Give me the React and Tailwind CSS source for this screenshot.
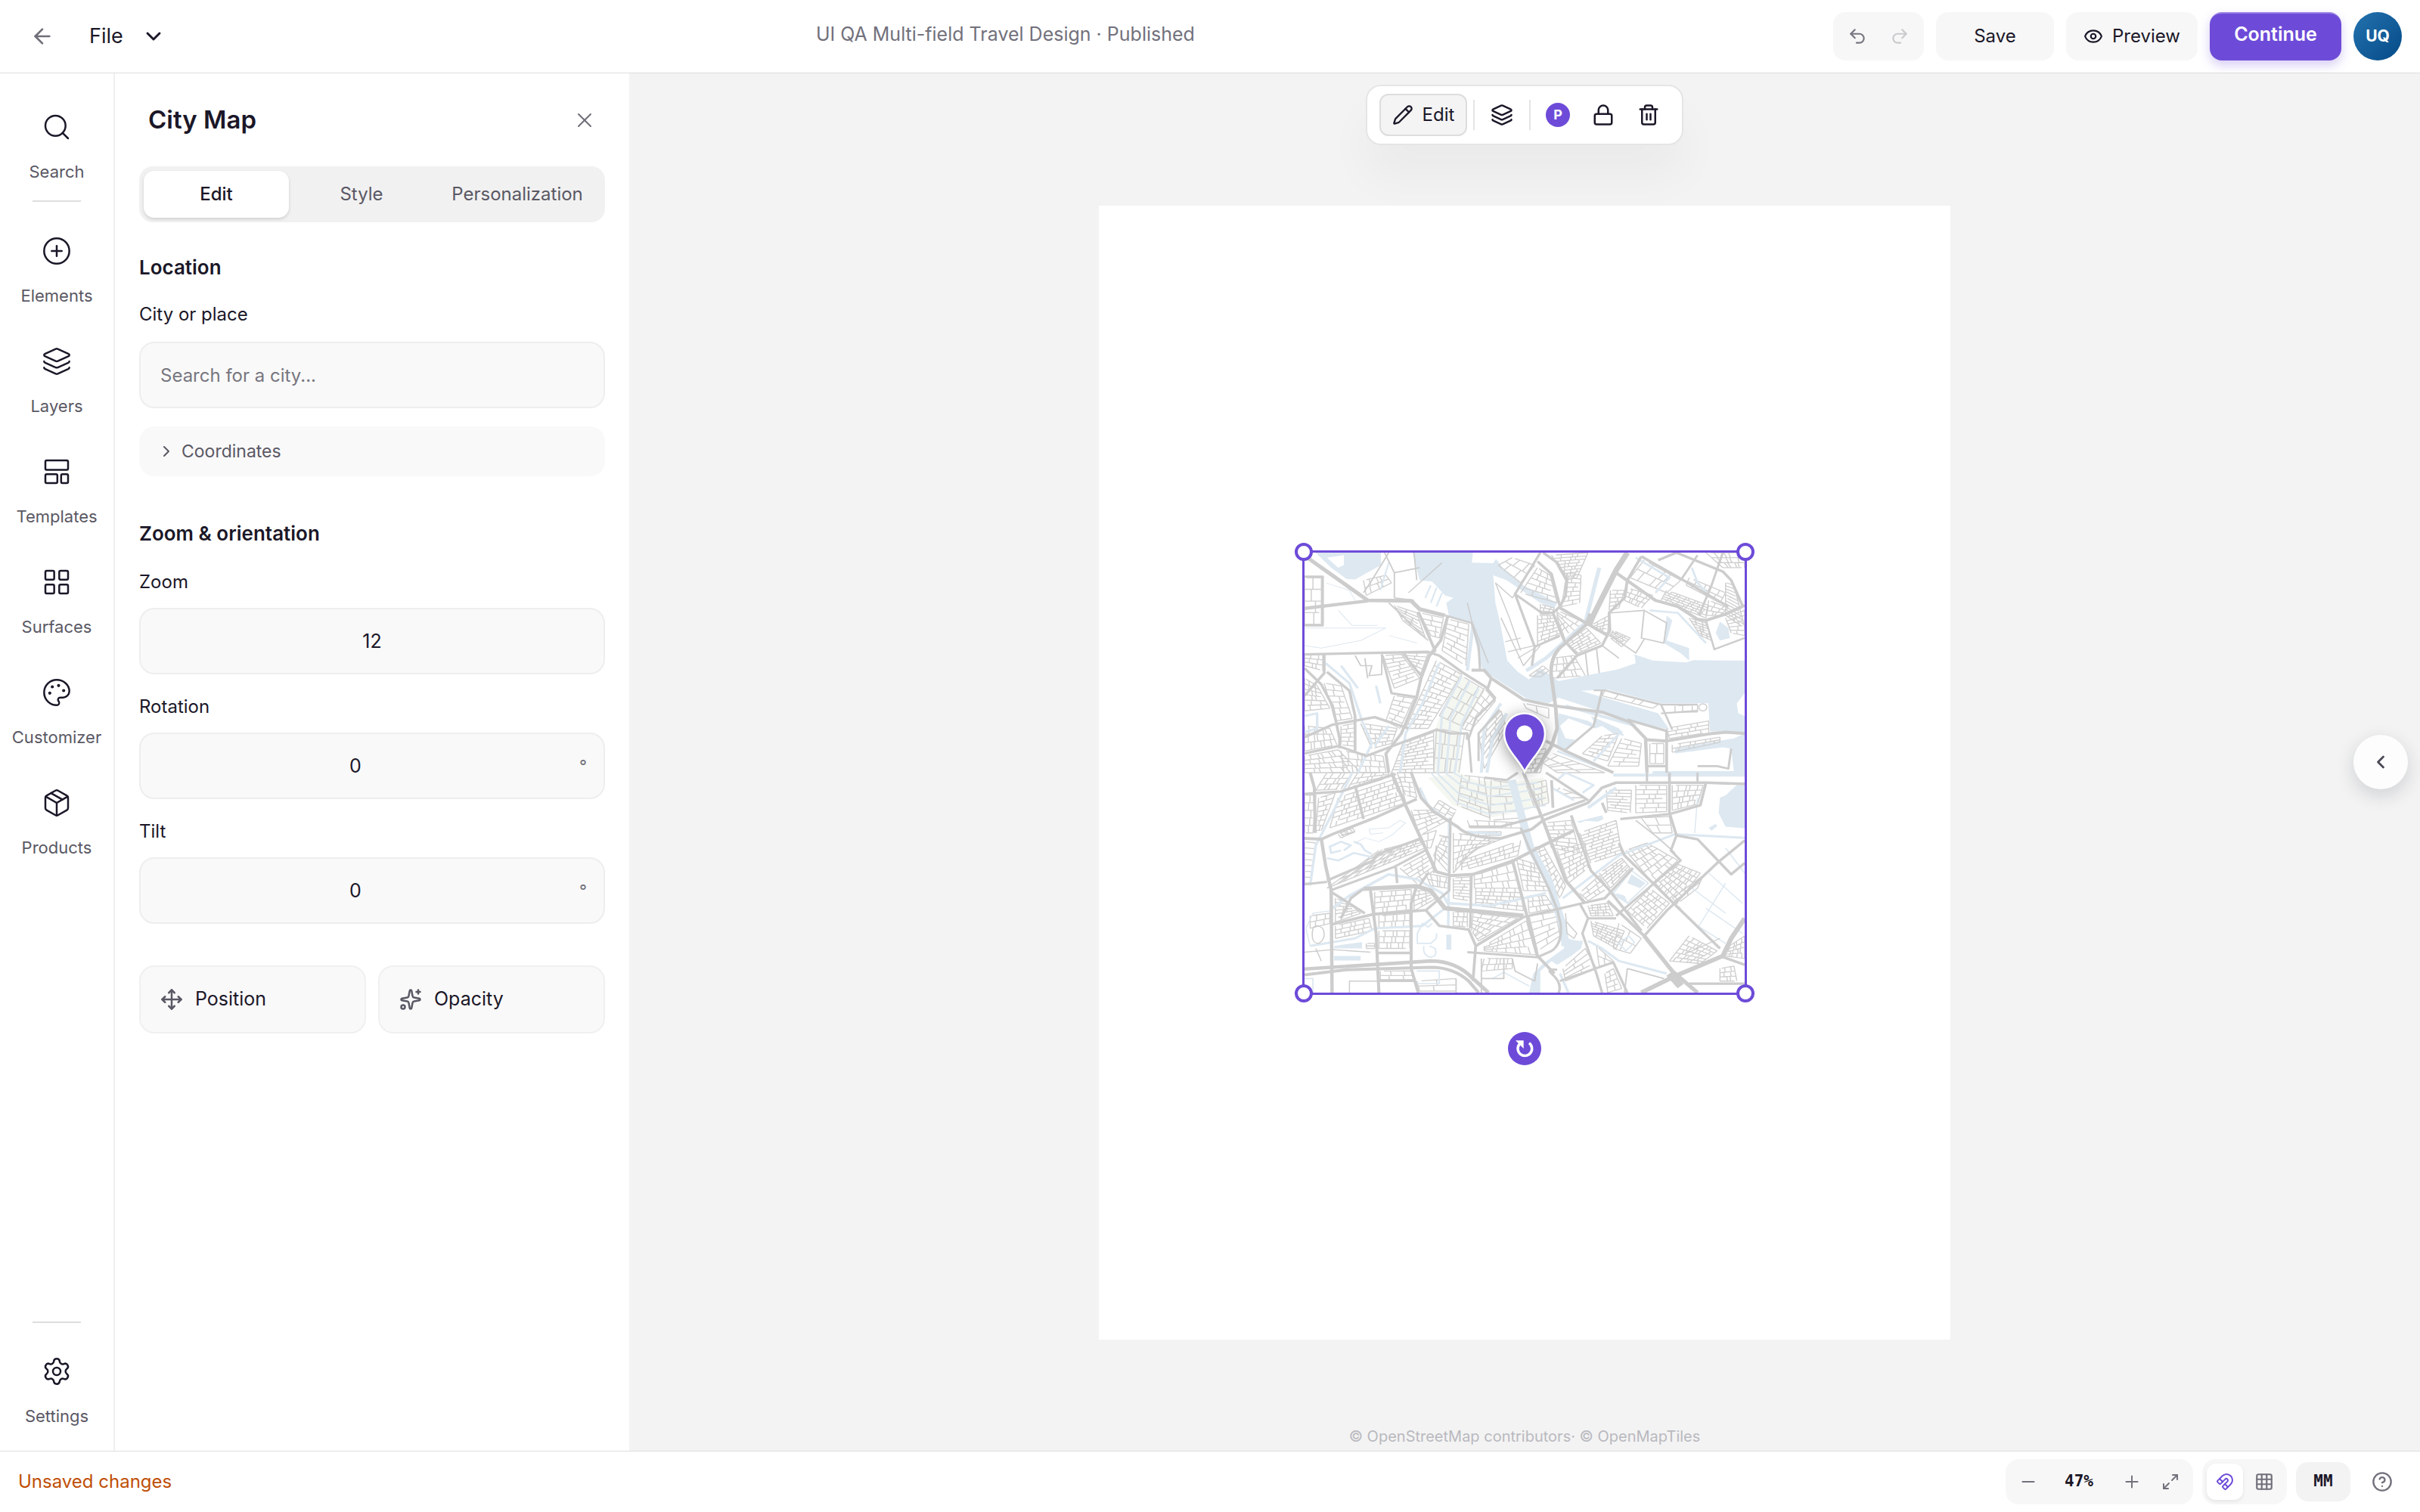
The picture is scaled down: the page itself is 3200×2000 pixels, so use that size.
import { useState } from 'react'
import {
    ArrowLeft, ChevronDown, ChevronLeft, ChevronRight, CircleHelp, CirclePlus, Eye, Grid3x3, Layers,
    LayoutGrid, Magnet, Maximize2, Minus, Move, Package, Palette, Pencil, Plus, Redo2, Search,
    Settings, Sparkles, Trash2, Undo2, X,
} from 'lucide-react'

// ---------- map data ----------

const waterNorth = [
    'M40 0H272V50L180 107L150 105L95 60Z',
    'M385 0H600L596 40L672 42L682 25L705 60L672 90L680 200L697 280L722 430L760 475L800 505L840 460L905 512L1000 490L1115 465L1180 440L1175 405L1240 430L1360 437L1385 428L1568 430V560L1540 600L1545 640L1568 650V720L1500 712L1445 712L1438 600H1270L1080 545L985 550L1060 575L1260 640L1300 705L1130 660L905 577L870 600L790 580L665 490L630 455L592 275L515 255L505 200L530 180L500 170L455 115L410 110Z',
    'M905 640L1010 670L1040 690L1020 650L1120 700L1140 730L1100 720L1060 690L1035 700L990 680L940 660L910 690L930 740L965 745L925 790L900 770Z',
    'M1320 780L1500 745L1530 740L1568 720V876H1530L1520 780L1490 775L1320 800Z',
    'M700 60L780 130L900 200L890 220L840 200L720 110L672 90Z',
    'M1290 250L1310 270L1290 350L1370 380L1370 430L1340 400L1280 360Z',
    'M1480 275L1510 300L1515 340L1480 350L1465 320Z',
]
const waterSouth = [
    'M1540 50L1500 90L1480 100L1475 160L1500 215L1568 222V50Z',
    'M920 650Q950 670 992 670L985 700L950 730L900 765L880 750L840 790L840 876H800L815 800L850 760L925 700Z',
    'M505 645H523V705H505Z',
    'M1165 405L1215 440L1195 460L1150 440ZM1110 480L1140 490L1150 515L1115 500Z',
    'M970 195L1060 170L1065 185L1045 195L1000 192L980 200Z',
    'M105 690L205 675V700H105ZM105 730H200V748H105Z',
    'M1440 220L1465 205L1470 212L1450 232Z',
]
const canalsNorth = [
    [14, 'M1050 60L1000 280L860 420L790 470'],
    [12, 'M600 290L580 470'],
    [9, 'M480 440L420 600L360 720L340 876'],
    [8, 'M560 490L490 640L475 876M590 510L520 660L505 876M620 540L560 680L535 876'],
    [9, 'M75 440L160 520L205 670L240 760L190 876M130 450L190 540M255 530L270 600'],
    [9, 'M300 690L250 770M0 650L45 640V700L0 715'],
    [11, 'M700 600L640 700L630 876M720 640L670 740L650 876'],
    [8, 'M1180 20L1300 100L1250 160M1380 60L1400 120L1460 190M1230 230L1330 240L1430 360'],
    [9, 'M900 790L1100 876M1130 710L1030 830'],
    [12, 'M1240 876H1568M930 610L1180 690'],
    [3, 'M0 300H290L200 350L60 380L0 370M75 120L160 150L180 190M120 230L170 290H260M300 330L400 360'],
    [6, 'M430 180L450 130M450 200L470 140M470 215L490 160M300 40L270 150'],
]
const canalsSouth = [
    [28, 'M738 30L785 220L805 300L870 430L900 540L918 600L930 690'],
    [9, 'M170 0L100 160L40 290L20 450'],
    [10, 'M410 60L440 130L520 200L570 235L700 245'],
    [6, 'M450 0L545 120L660 165L860 130M470 0L560 95L660 130L850 100M500 0L575 65L660 95L840 65M530 0L590 40L660 60L830 40'],
    [10, 'M100 540L160 490L300 405L400 425L490 480L510 520L660 530L860 480'],
    [9, 'M515 180L512 620M500 540L420 610L250 620L180 660L20 690'],
    [4, 'M20 690L5 620L30 560L95 550'],
    [9, 'M920 500L1120 330L1320 245L1568 260'],
    [8, 'M880 60L960 110M900 30L930 0L1030 50L990 80'],
    [12, 'M1100 10H1568M1010 140L1110 60'],
    [9, 'M1010 670L1060 700L1120 750L1290 800M910 800L940 876'],
    [4, 'M1440 400L1560 520M1380 460L1500 560M1500 440L1400 620M1400 610L1500 680M1430 540L1560 640M1400 100L1390 240'],
    [5, 'M670 820L710 795L800 850M1500 300L1568 400M0 820H30V876M400 790H480V840H400'],
    [8, 'M130 310L95 320L90 295L130 275L165 290L140 310M175 275L200 285L215 310L240 325M80 340L120 350L175 320L235 335'],
    [3, 'M180 280L215 260L265 275L310 250L360 200L340 190L300 220L230 225L235 245L280 240'],
    [5, 'M402 640L420 600L440 615L455 600M402 640V680H450L470 660V640M425 690Q420 730 450 735Q475 730 465 700L445 690'],
    [5, 'M1100 480L1165 390L1225 440L1150 520Z'],
    [5, 'M1120 680L1155 650L1175 675L1145 710Z'],
]

const roadsNorth = [
    [15, 'M10 20L225 190L380 192L410 225L500 250'],
    [8, 'M500 250L595 280L620 370L625 465'],
    [13, 'M0 222L225 192'],
    [8, 'M0 95H65V290H0'],
    [10, 'M0 405L440 395L480 410L560 475L645 535L680 580'],
    [12, 'M595 468H640L665 500L780 585L870 607L1060 635L1160 675L1215 740L1220 876'],
    [10, 'M665 500L650 550'],
    [20, 'M1150 0L1110 70L1060 180L1020 270'],
    [13, 'M1020 270L925 365Q878 400 878 480L895 620L900 700L880 770L820 876'],
    [28, 'M1025 245L1010 290'],
    [12, 'M1110 80L1250 190L1330 215L1400 265L1430 270L1500 245L1568 210'],
    [10, 'M1200 15L1350 110L1440 170L1510 215'],
    [10, 'M1200 15L1150 110L1140 180L1085 240L1088 310L1060 370L970 410L900 500'],
    [10, 'M1260 30L1325 0L1490 75L1520 110L1560 210'],
    [8, 'M1490 0L1450 130L1405 250M1400 10L1340 110'],
    [12, 'M910 220L1010 285L1080 330'],
    [10, 'M850 0L900 40L935 110L930 170L910 215L885 240L925 350L970 405'],
    [10, 'M830 35L880 85L910 215'],
    [9, 'M840 0L750 165L845 240L885 240M750 165L820 375L810 450M820 375L910 330'],
    [7, 'M1430 270L1460 385L1568 340'],
    [11, 'M510 255L485 350L445 410L415 500L400 575L345 720L290 800L300 876'],
    [10, 'M405 235L465 390L445 410'],
    [9, 'M275 405L310 560L400 575M350 400L415 490'],
    [10, 'M70 405V480L0 570M0 460L60 525L100 610L125 740V780'],
    [10, 'M80 475L160 550L180 650V790M100 876'],
    [10, 'M0 735L100 685L250 655L370 700'],
    [10, 'M0 800L120 770L220 810L350 755L470 705L520 720H580V745'],
    [8, 'M680 580L610 660L585 740L595 876M695 625L620 720V830'],
    [7, 'M1030 548L1070 548L1270 605L1310 705M1270 640L1400 630M1270 605H1400'],
    [9, 'M1060 550L1030 690L930 785'],
    [12, 'M860 750L930 790L1100 876'],
    [10, 'M1150 665L1290 710V876M1290 850H1215'],
    [12, 'M1220 745L1290 750L1440 722L1500 715L1568 720'],
    [8, 'M1400 850H1470L1510 860L1520 780'],
    [4, 'M580 200L595 270L655 440M490 40L370 160'],
    [4, 'M680 120L740 180L750 165M680 120L730 260L770 390M700 260L780 450L840 370M715 355L770 340M725 395L820 370M760 420L820 380'],
    [5, 'M390 0L400 110M285 0L320 80L410 60M320 80V180L390 190M300 0L240 110L210 160'],
    [5, 'M1090 240L1210 230L1290 280L1280 360L1200 340L1210 230M1090 330L1180 400L1210 345M1000 390L1010 490M1040 380L1050 480M1060 370L1120 420'],
    [5, 'M300 200L440 350M225 500L215 420M180 410L200 450H240L230 490L275 485V405'],
]
const roadsSouth = [
    [11, 'M20 0L35 60L38 240'],
    [12, 'M0 262L60 265L75 370L95 470L98 876'],
    [11, 'M60 265L100 245L250 180L400 105'],
    [10, 'M0 85L130 75L325 5M180 50L210 185'],
    [12, 'M310 0L360 130L470 395L520 410L600 405L745 350L850 290L960 230'],
    [11, 'M380 0L415 100L460 155L545 215Q580 260 700 262L810 225L850 190L1010 120L1060 60L1110 40H1430L1568 45'],
    [12, 'M780 0L850 190L930 430L1000 520'],
    [10, 'M640 20L720 30L760 0M585 215L700 215L850 170L1000 110'],
    [10, 'M80 430L245 350L260 325L420 260'],
    [9, 'M90 470L320 375L430 310M0 445L80 435'],
    [17, 'M210 463L400 452L450 470L500 540L780 570'],
    [10, 'M130 580L165 500L210 463M95 475L215 560'],
    [10, 'M780 575L990 520L1070 500L1170 380'],
    [11, 'M740 345L790 560L830 730L890 800'],
    [11, 'M95 605L240 565L430 548'],
    [10, 'M430 545L480 610L585 625L610 690L600 830'],
    [11, 'M610 690L780 575'],
    [9, 'M580 715L830 735L880 710Q920 680 912 600L900 545L870 460L800 300L770 220'],
    [14, 'M0 782L450 750Q540 750 600 820L655 876'],
    [12, 'M0 805L150 785L450 775Q530 775 585 830L620 876'],
    [11, 'M235 470L255 640L265 876M255 718H380M265 828H390'],
    [11, 'M400 450L380 520V780L405 876'],
    [9, 'M980 520L1010 580L990 640L1040 800L1060 876M1010 580H1110'],
    [10, 'M950 170L1020 390L1080 460L1200 630'],
    [11, 'M1080 510L1210 650'],
    [15, 'M1210 650L1310 790L1400 876'],
    [10, 'M1120 280L1140 330L1480 700'],
    [17, 'M1200 876L1320 810L1490 730L1520 660L1568 580'],
    [28, 'M1300 800L1340 850'],
    [10, 'M1480 730L1568 765M1370 840H1568'],
    [10, 'M1210 650L1290 550L1470 360L1568 270'],
    [10, 'M1300 0V160L1325 250L1400 265L1520 405L1568 360'],
    [10, 'M1060 120L1075 160M1125 185L1300 165L1410 130L1430 40'],
    [9, 'M1325 250L1305 310L1340 350L1110 570'],
    [9, 'M880 800Q920 840 905 876M880 800Q860 780 900 785M910 830L1100 755L1150 876'],
    [9, 'M520 180L515 470L430 550M440 400L410 450M595 405L590 620M325 375L330 440'],
    [10, 'M860 0L1010 110M880 30L885 140'],
    [8, 'M1220 0V35M1400 0V35'],
    [5, 'M130 250L180 235M470 290L460 400M480 250L520 260M1180 190L1260 260L1320 320M1150 780L1280 820M1150 780L1140 876'],
    [4, 'M930 560L935 640L960 660L970 640L930 590M1360 720L1480 660M1310 520L1340 540'],
    [5, 'M630 740V876M710 740V820H630M740 740L750 790L820 830L830 760'],
    [4, 'M30 620Q20 680 50 680Q80 660 65 620Q40 600 30 620'],
    [4, 'M160 876V830H265M540 820V876M0 715L100 705L235 715M40 700L60 750'],
]

// street blocks: four corners clockwise, then rows and cuts per row
const blocksNorth = [
    [470, 430, 560, 485, 440, 700, 360, 700, 18, 4], [560, 490, 640, 545, 560, 690, 480, 650, 5, 4],
    [470, 700, 570, 720, 550, 876, 460, 876, 4, 4], [350, 760, 460, 715, 460, 876, 310, 876, 12, 5],
    [620, 720, 700, 630, 720, 700, 640, 860, 7, 4], [640, 540, 680, 590, 590, 710, 560, 700, 8, 2],
    [280, 410, 345, 405, 410, 500, 320, 540, 10, 3], [360, 400, 440, 400, 415, 480, 380, 450, 6, 2],
    [510, 265, 585, 285, 575, 450, 490, 390, 9, 3], [410, 240, 495, 260, 480, 340, 450, 330, 5, 3],
    [320, 210, 400, 240, 430, 340, 350, 270, 7, 3], [0, 500, 45, 530, 90, 620, 0, 630, 8, 4],
    [70, 520, 130, 530, 170, 660, 110, 670, 8, 3], [0, 690, 90, 700, 115, 765, 0, 790, 4, 8],
    [130, 690, 180, 680, 180, 770, 130, 765, 6, 3], [200, 680, 330, 700, 310, 760, 240, 780, 6, 5],
    [0, 810, 120, 785, 200, 876, 0, 876, 5, 8], [130, 790, 280, 810, 290, 876, 140, 876, 4, 8],
    [320, 570, 390, 580, 340, 700, 290, 670, 8, 3], [0, 405, 65, 405, 65, 470, 0, 450, 4, 4],
    [0, 100, 60, 100, 60, 285, 0, 285, 5, 2], [210, 110, 290, 90, 310, 120, 220, 170, 3, 5],
    [880, 10, 1010, 0, 970, 100, 930, 110, 10, 5], [935, 80, 985, 90, 980, 200, 915, 215, 9, 3],
    [740, 20, 820, 50, 770, 120, 690, 50, 3, 4], [830, 60, 875, 90, 900, 200, 770, 160, 6, 4],
    [840, 205, 890, 220, 880, 245, 840, 245, 4, 4], [830, 250, 890, 250, 920, 330, 830, 370, 9, 5],
    [900, 230, 1000, 280, 930, 350, 900, 260, 5, 4], [930, 360, 1005, 300, 1055, 360, 975, 400, 8, 5],
    [1020, 290, 1085, 250, 1080, 320, 1040, 310, 5, 4], [1100, 310, 1160, 340, 1130, 375, 1085, 335, 6, 5],
    [1090, 150, 1140, 150, 1120, 220, 1085, 230, 6, 3], [1150, 140, 1240, 170, 1200, 220, 1140, 190, 4, 7],
    [1210, 30, 1340, 110, 1290, 160, 1160, 100, 3, 5], [1290, 150, 1440, 210, 1430, 260, 1270, 190, 6, 12],
    [1370, 100, 1500, 160, 1480, 200, 1360, 130, 3, 6], [1370, 260, 1430, 280, 1450, 350, 1410, 330, 7, 4],
    [1440, 190, 1510, 220, 1480, 250, 1430, 250, 4, 4], [1430, 0, 1568, 0, 1568, 60, 1490, 60, 4, 6],
    [1500, 120, 1530, 130, 1568, 300, 1500, 250, 14, 1], [1500, 260, 1568, 230, 1568, 330, 1520, 320, 6, 3],
    [885, 420, 960, 410, 1000, 490, 880, 500, 4, 6], [1070, 550, 1260, 605, 1240, 620, 1060, 570, 1, 5],
    [1290, 700, 1440, 670, 1440, 715, 1300, 740, 4, 5], [1310, 765, 1480, 735, 1480, 755, 1310, 795, 2, 8],
    [1060, 730, 1120, 720, 1080, 830, 990, 800, 8, 3], [1130, 740, 1200, 760, 1190, 850, 1080, 850, 7, 3],
    [780, 600, 870, 620, 870, 660, 790, 620, 1, 2], [860, 790, 1070, 876, 900, 876, 840, 830, 3, 7],
    [850, 450, 870, 470, 840, 495, 800, 490, 2, 3], [1230, 760, 1280, 760, 1280, 840, 1230, 840, 3, 2],
    [760, 800, 860, 780, 840, 876, 780, 876, 6, 3], [1320, 610, 1400, 605, 1400, 635, 1320, 635, 1, 4],
]
const blocksSouth = [
    [0, 90, 40, 90, 30, 240, 0, 240, 6, 2], [50, 100, 110, 80, 60, 230, 40, 230, 9, 2],
    [120, 100, 340, 20, 360, 120, 90, 220, 8, 12], [80, 0, 170, 0, 130, 65, 40, 70, 4, 5],
    [190, 0, 300, 0, 300, 20, 150, 70, 4, 6], [330, 0, 380, 0, 400, 100, 360, 90, 6, 3],
    [380, 150, 450, 150, 510, 190, 410, 250, 6, 4], [410, 250, 470, 230, 450, 300, 430, 300, 3, 3],
    [265, 310, 410, 270, 430, 300, 80, 460, 5, 14], [340, 380, 440, 320, 460, 390, 400, 440, 6, 4],
    [490, 260, 520, 250, 515, 400, 460, 330, 7, 2], [530, 240, 700, 265, 600, 310, 530, 400, 8, 8],
    [560, 390, 760, 330, 770, 270, 560, 350, 4, 10], [530, 420, 590, 415, 590, 510, 530, 500, 9, 3],
    [605, 410, 740, 360, 770, 460, 605, 460, 4, 7], [610, 460, 770, 460, 780, 550, 610, 530, 6, 9],
    [755, 340, 840, 370, 870, 470, 780, 470, 7, 5], [795, 490, 860, 490, 890, 540, 800, 560, 4, 5],
    [810, 300, 850, 290, 930, 450, 910, 500, 12, 2],
    [560, 10, 640, 20, 660, 180, 545, 130, 6, 4], [665, 30, 730, 40, 770, 180, 660, 190, 6, 3],
    [790, 50, 860, 30, 870, 120, 820, 140, 5, 4], [580, 190, 780, 200, 770, 220, 590, 220, 1, 8],
    [600, 235, 700, 235, 700, 250, 600, 250, 1, 6], [855, 200, 950, 190, 980, 320, 880, 300, 9, 4],
    [900, 310, 1000, 280, 1010, 380, 940, 440, 9, 5], [980, 240, 1110, 190, 1130, 320, 1020, 360, 12, 5],
    [1075, 70, 1165, 70, 1160, 160, 1080, 150, 9, 2], [1180, 50, 1290, 50, 1290, 155, 1180, 160, 8, 4],
    [1310, 50, 1420, 50, 1400, 125, 1310, 150, 5, 6], [1200, 180, 1300, 175, 1310, 240, 1240, 240, 3, 3],
    [1145, 310, 1220, 280, 1330, 350, 1240, 440, 8, 7], [1320, 360, 1410, 400, 1320, 530, 1250, 440, 9, 9],
    [1230, 460, 1300, 520, 1220, 620, 1150, 550, 9, 6], [1050, 400, 1130, 340, 1160, 380, 1090, 460, 7, 5],
    [980, 480, 1050, 410, 1080, 460, 1010, 510, 4, 4], [1010, 530, 1080, 520, 1100, 570, 1020, 570, 5, 7],
    [1020, 590, 1140, 630, 1110, 700, 1030, 650, 7, 8],
    [1120, 600, 1200, 660, 1160, 720, 1100, 700, 3, 3], [1370, 650, 1470, 710, 1410, 760, 1300, 750, 8, 8],
    [1500, 700, 1568, 650, 1568, 740, 1500, 730, 5, 6], [1480, 780, 1530, 770, 1540, 830, 1480, 830, 4, 4],
    [250, 475, 380, 465, 380, 545, 250, 560, 5, 7], [390, 470, 440, 470, 470, 500, 390, 550, 5, 4],
    [110, 500, 160, 520, 200, 560, 110, 595, 7, 4], [110, 610, 230, 580, 240, 630, 110, 660, 4, 7],
    [265, 570, 375, 560, 375, 615, 265, 620, 3, 6], [265, 630, 375, 630, 375, 700, 265, 700, 4, 7],
    [530, 555, 580, 555, 580, 615, 530, 610, 4, 4], [600, 560, 760, 580, 620, 670, 595, 630, 6, 6],
    [640, 690, 790, 590, 825, 725, 640, 710, 5, 9], [800, 570, 895, 555, 910, 650, 830, 710, 6, 3],
    [640, 740, 740, 740, 740, 780, 630, 790, 3, 7], [920, 780, 1000, 700, 1040, 780, 930, 830, 5, 3],
    [1040, 690, 1100, 750, 1100, 760, 1050, 770, 3, 2], [1070, 800, 1100, 780, 1130, 860, 1080, 876, 5, 2],
    [450, 155, 480, 110, 540, 150, 520, 190, 4, 4], [270, 790, 380, 790, 390, 825, 270, 825, 2, 4],
    [400, 830, 540, 820, 540, 870, 410, 870, 3, 3], [430, 400, 520, 420, 510, 460, 450, 450, 3, 6],
    [0, 275, 40, 280, 20, 440, 0, 440, 9, 1], [1330, 520, 1400, 460, 1420, 410, 1310, 500, 3, 3],
    [910, 60, 1000, 100, 950, 100, 900, 70, 1, 3], [20, 570, 90, 560, 90, 600, 20, 620, 2, 4],
    [120, 245, 170, 220, 180, 235, 130, 260, 1, 7], [220, 680, 250, 680, 250, 700, 220, 700, 3, 1],
]

// builds the staggered street grid of one block
function streets([ax, ay, bx, by, cx, cy, dx, dy, maxRows, maxCuts]) {
    const rows = Math.max(1, Math.round(maxRows * 0.8))
    const cuts = Math.max(1, Math.round(maxCuts * 0.75))
    const at = (u, v) => {
        const x = (1 - v) * ((1 - u) * ax + u * bx) + v * ((1 - u) * dx + u * cx)
        const y = (1 - v) * ((1 - u) * ay + u * by) + v * ((1 - u) * dy + u * cy)
        return `${Math.round(x)} ${Math.round(y)}`
    }
    let d = ''
    for (let i = 0; i <= rows; i++) {
        const start = (i * 7) % 5 === 0 ? 0.12 : 0
        const end = (i * 3) % 4 === 1 ? 0.86 : 1
        d += `M${at(start, i / rows)}L${at(end, i / rows)}`
        if (i === rows) break
        for (let j = 0; j <= cuts; j++) {
            const shift = j > 0 && j < cuts ? (((i * 5 + j * 3) % 7) - 3) / 10 : 0
            const u = (j + shift) / cuts
            d += `M${at(u, i / rows)}L${at(u, (i + 1) / rows)}`
        }
    }
    return d
}

function MapHalf({ water, canals, roads, blocks, green }) {
    return (
        <>
            <path d={green} fill="#f5f7f1" />
            {water.map((d) => <path key={d} d={d} fill="#dde8f1" />)}
            <path d={blocks.map(streets).join('')} stroke="#d0d0d0" strokeWidth="4" />
            {canals.map(([w, d]) => <path key={d} d={d} stroke="#dde8f1" strokeWidth={w} />)}
            {roads.map(([w, d]) => <path key={d} d={d} stroke="#cdcdcd" strokeWidth={w} />)}
        </>
    )
}

function CityMap() {
    return (
        <svg viewBox="0 0 1568 1752" preserveAspectRatio="none" className="block h-full w-full" fill="none" strokeLinejoin="round">
            <MapHalf
                water={waterNorth} canals={canalsNorth} roads={roadsNorth} blocks={blocksNorth}
                green="M545 480L640 555L560 700L550 876H462L470 690Z"
            />
            <path d="M80 20L140 10V50L120 60Z" fill="#fff" />
            <circle cx="1419" cy="616" r="14" fill="#fff" stroke="#cecece" strokeWidth="4" />
            <g transform="translate(0 876)">
                <MapHalf
                    water={waterSouth} canals={canalsSouth} roads={roadsSouth} blocks={blocksSouth}
                    green="M440 20L550 0L610 30L740 40L850 20L875 110L790 150L660 180L530 130Z"
                />
            </g>
        </svg>
    )
}

// ---------- small drawings ----------

function TemplatesIcon() {
    return (
        <svg viewBox="0 0 24 24" className="size-10" fill="none" stroke="currentColor" strokeWidth="1.5">
            <rect x="3" y="3" width="18" height="7.5" rx="1" />
            <rect x="3" y="14" width="9.5" height="7" rx="1" />
            <rect x="15.5" y="14" width="5.5" height="7" rx="1" />
        </svg>
    )
}

function LockIcon() {
    return (
        <svg viewBox="0 0 24 24" className="size-[30px]" fill="none" stroke="currentColor" strokeWidth="2" strokeLinecap="round">
            <rect x="3" y="11" width="18" height="11" rx="2" />
            <path d="M7 11V7a5 5 0 0 1 10 0v4" />
        </svg>
    )
}

function MapPin() {
    return (
        <svg viewBox="0 0 56 80" className="h-20 w-14 overflow-visible drop-shadow-[0_4px_10px_rgba(0,0,0,0.4)]">
            <path d="M28 79C21 63 1 48 1 28.500a27 27 0 0 1 54 0C55 48 35 63 28 79Z" fill="#6d4bd8" stroke="#fff" strokeWidth="2.500" />
            <circle cx="28" cy="28" r="10.500" fill="#fff" />
        </svg>
    )
}

function RotateGlyph() {
    return (
        <svg viewBox="0 0 24 24" className="size-8" fill="none">
            <path d="M16.500 6.500A7 7 0 1 1 7 7.500" stroke="#fff" strokeWidth="2.600" />
            <path d="M3 4H11V12Z" fill="#fff" />
        </svg>
    )
}

const navItems = [
    { label: 'Elements', icon: CirclePlus },
    { label: 'Layers', icon: Layers },
    { label: 'Templates', icon: TemplatesIcon },
    { label: 'Surfaces', icon: LayoutGrid },
    { label: 'Customizer', icon: Palette },
    { label: 'Products', icon: Package },
]

function NavItem({ label, icon: Icon }) {
    return (
        <button type="button" className="flex w-full flex-col items-center gap-6 py-3 text-[#1b1728]">
            <Icon className="size-10" strokeWidth={1.5} />
            <span className="text-[22px] leading-[30px] text-[#5a5864]">{label}</span>
        </button>
    )
}

function NumberField({ id, label, value, suffix }) {
    const [current, setCurrent] = useState(value)
    return (
        <div>
            <label htmlFor={id} className="block text-2xl leading-8">{label}</label>
            <div className="mt-[18px] flex h-[88px] items-center rounded-[20px] border-2 border-[#eeeeee] bg-[#f9f9f9]">
                <input
                    id={id}
                    value={current}
                    onChange={(e) => setCurrent(e.target.value)}
                    className="h-full min-w-0 flex-1 bg-transparent text-center text-[25px] outline-none"
                />
                {suffix && <span className="w-11 pr-[22px] text-right text-[22px] text-[#6f6e79]">{suffix}</span>}
            </div>
        </div>
    )
}

const tabs = ['Edit', 'Style', 'Personalization']

function SidePanel() {
    const [tab, setTab] = useState('Edit')
    return (
        <aside className="w-[680px] shrink-0 bg-white px-8 pt-[31px]">
            <div className="flex h-[62px] items-center justify-between pr-[11px] pl-3">
                <h1 className="text-[33px] font-semibold">City Map</h1>
                <button type="button" aria-label="Close"><X className="size-8 text-[#6f6e79]" strokeWidth={1.5} /></button>
            </div>
            <div className="mt-[30px] flex h-[74px] rounded-[18px] bg-[#f1f1f1] p-1.5">
                {tabs.map((name) => (
                    <button
                        key={name}
                        type="button"
                        onClick={() => setTab(name)}
                        className={`rounded-[14px] text-2xl ${name === 'Personalization' ? 'w-[220px]' : 'flex-1'} ${tab === name ? 'bg-white font-medium shadow-[0_2px_4px_rgba(0,0,0,0.14)]' : 'text-[#5a5864]'}`}
                    >
                        {name}
                    </button>
                ))}
            </div>

            <h2 className="mt-11 text-[26px] leading-8 font-semibold">Location</h2>
            <label htmlFor="city" className="mt-[30px] block text-2xl leading-8">City or place</label>
            <input
                id="city"
                placeholder="Search for a city..."
                className="mt-5 block h-[88px] w-full rounded-[20px] border-2 border-[#eeeeee] bg-[#f9f9f9] px-[26px] text-2xl outline-none placeholder:text-[#777680]"
            />
            <button type="button" className="mt-6 flex h-[66px] w-full items-center gap-2 rounded-[20px] bg-[#f9f9f9] px-6 text-[23px] text-[#5a5864]">
                <ChevronRight className="size-6" strokeWidth={2} />
                Coordinates
            </button>

            <h2 className="mt-[60px] mb-8 text-[26px] leading-8 font-semibold">Zoom &amp; orientation</h2>
            <div className="flex flex-col gap-[27px]">
                <NumberField id="zoom" label="Zoom" value="12" />
                <NumberField id="rotation" label="Rotation" value="0" suffix="°" />
                <NumberField id="tilt" label="Tilt" value="0" suffix="°" />
            </div>

            <div className="mt-[55px] grid grid-cols-2 gap-4">
                <button type="button" className="flex h-[90px] items-center gap-4 rounded-[20px] border-2 border-[#f0f0f0] bg-[#f9f9f9] px-[26px] text-[25px]">
                    <Move className="size-[30px] text-[#5a5864]" />
                    Position
                </button>
                <button type="button" className="flex h-[90px] items-center gap-4 rounded-[20px] border-2 border-[#f0f0f0] bg-[#f9f9f9] px-[26px] text-[25px]">
                    <Sparkles className="size-[30px] text-[#5a5864]" />
                    Opacity
                </button>
            </div>
        </aside>
    )
}

function TopBar() {
    return (
        <header className="flex h-[97px] shrink-0 items-center border-b border-[#dedede] bg-white pr-6 pl-10">
            <button type="button" aria-label="Back"><ArrowLeft className="size-8 text-[#6f6e79]" strokeWidth={2} /></button>
            <button type="button" className="ml-[46px] flex items-center gap-6 text-[27px]">
                File
                <ChevronDown className="size-8" strokeWidth={2.2} />
            </button>
            <p className="flex-1 pb-1 pl-4 text-center text-[25px] text-[#72717c]">
                <span>UI QA Multi-field Travel Design</span> · Published
            </p>
            <div className="flex gap-4">
                <div className="flex h-16 w-[120px] items-center justify-around rounded-2xl bg-[#f7f7f7] px-1 text-[#777680]">
                    <button type="button" aria-label="Undo"><Undo2 className="size-[26px]" strokeWidth={2} /></button>
                    <button type="button" aria-label="Redo" className="opacity-35"><Redo2 className="size-[26px]" strokeWidth={2} /></button>
                </div>
                <button type="button" className="h-16 w-[156px] rounded-2xl bg-[#f7f7f7] text-2xl">Save</button>
                <button type="button" className="flex h-16 w-[174px] items-center justify-center gap-3 rounded-2xl bg-[#f7f7f7] text-2xl">
                    <Eye className="size-[26px]" />
                    Preview
                </button>
                <button type="button" className="h-16 w-[174px] rounded-2xl border-t-2 border-[#9b84e4] bg-[#6d4bd8] pb-1.5 text-[25px] font-semibold text-white shadow-[0_6px_14px_rgba(109,75,216,0.28)]">
                    Continue
                </button>
                <button type="button" className="size-16 rounded-full bg-gradient-to-br from-[#2272ae] to-[#054b88] text-[21px] font-bold text-white">UQ</button>
            </div>
        </header>
    )
}

function ObjectToolbar() {
    return (
        <div className="z-10 flex h-20 items-center rounded-[20px] border-2 border-[#e5e5e5] bg-white px-4 shadow-[0_40px_60px_rgba(0,0,0,0.04)]">
            <button type="button" className="flex h-14 w-[116px] items-center justify-center gap-3 rounded-xl border-2 border-[#dddddd] bg-[#f4f4f4] text-2xl">
                <Pencil className="size-7" />
                Edit
            </button>
            <span className="mx-2 h-10 w-0.5 bg-[#e5e5e5]" />
            <button type="button" aria-label="Arrange" className="flex size-14 items-center justify-center"><Layers className="size-[30px]" /></button>
            <span className="mx-2 h-10 w-0.5 bg-[#e5e5e5]" />
            <div className="flex gap-1">
                <button type="button" className="flex size-14 items-center justify-center">
                    <span className="flex size-8 items-center justify-center rounded-full bg-[#6d4bd8] text-lg font-bold text-white">P</span>
                </button>
                <button type="button" aria-label="Lock" className="flex size-14 items-center justify-center"><LockIcon /></button>
                <button type="button" aria-label="Delete" className="flex size-14 items-center justify-center"><Trash2 className="size-[30px]" /></button>
            </div>
        </div>
    )
}

const handles = ['-top-[13px] -left-[13px]', '-top-[13px] -right-[13px]', '-bottom-[13px] -left-[13px]', '-right-[13px] -bottom-[13px]']

function Canvas() {
    return (
        <main className="relative flex min-w-0 flex-1 flex-col items-center bg-[#f3f3f3] pt-[15px]">
            <ObjectToolbar />
            <div className="mt-20 flex h-[1500px] w-[1126px] items-center justify-center bg-white">
                <div className="relative size-[588px] border-[3px] border-[#6d4bd8] bg-white">
                    <CityMap />
                    <div className="absolute bottom-1/2 left-1/2 -translate-x-1/2"><MapPin /></div>
                    {handles.map((place) => (
                        <span key={place} className={`absolute size-6 rounded-full border-4 border-[#6d4bd8] bg-white ${place}`} />
                    ))}
                    <button type="button" aria-label="Rotate" className="absolute top-full left-1/2 mt-[52px] flex size-11 -translate-x-1/2 items-center justify-center rounded-full bg-[#6d4bd8]">
                        <RotateGlyph />
                    </button>
                </div>
            </div>
            <p className="mt-auto mb-1.5 text-xl leading-[26px] text-[#b9b9bf]">© OpenStreetMap contributors· © OpenMapTiles</p>
            <button type="button" aria-label="Open panel" className="absolute top-1/2 right-4 flex size-[72px] -translate-y-1/2 items-center justify-center rounded-full bg-[#fdfdfd] text-[#4b4757] shadow-[0_8px_24px_rgba(20,30,50,0.16)]">
                <ChevronLeft className="size-7" strokeWidth={2.4} />
            </button>
        </main>
    )
}

function StatusBar() {
    return (
        <footer className="flex h-[81px] shrink-0 items-center justify-between border-t border-[#dedede] bg-white pr-9 pl-6">
            <p className="text-2xl text-[#bf4e06]">Unsaved changes</p>
            <div className="flex items-center gap-3 text-[#72717c]">
                <div className="flex h-[60px] w-[248px] items-center rounded-[18px] bg-[#f7f7f7] px-1.5">
                    <button type="button" aria-label="Zoom out" className="flex w-12 justify-center"><Minus className="size-[26px]" strokeWidth={1.8} /></button>
                    <span className="flex-1 text-center font-['DejaVu_Sans_Mono'] text-[21px] font-bold text-[#1b1728]">47%</span>
                    <button type="button" aria-label="Zoom in" className="flex w-[54px] justify-center"><Plus className="size-[26px]" strokeWidth={1.8} /></button>
                    <button type="button" aria-label="Fit" className="flex w-12 justify-center"><Maximize2 className="size-6" /></button>
                </div>
                <div className="flex h-[60px] items-center gap-1 rounded-[18px] bg-[#f7f7f7] px-1.5">
                    <button type="button" aria-label="Snap" className="flex size-12 items-center justify-center rounded-xl bg-white text-[#6d4bd8] shadow-[0_2px_5px_rgba(0,0,0,0.08)]"><Magnet className="size-6" /></button>
                    <button type="button" aria-label="Grid" className="flex size-12 items-center justify-center"><Grid3x3 className="size-[26px]" /></button>
                </div>
                <button type="button" className="h-[52px] w-[72px] rounded-2xl bg-[#f3f3f3] font-['DejaVu_Sans_Mono'] text-[21px] font-bold text-[#1b1728]">MM</button>
                <button type="button" aria-label="Help" className="ml-4"><CircleHelp className="size-[28px]" /></button>
            </div>
        </footer>
    )
}

export default function App() {
    return (
        <div className="flex h-screen flex-col overflow-hidden bg-white font-['Inter',sans-serif] text-[#1b1728]">
            <TopBar />
            <div className="flex min-h-0 flex-1">
                <nav className="flex w-[152px] shrink-0 flex-col items-center border-r-2 border-[#efefef] bg-white pt-[39px] pb-[19px]">
                    <NavItem label="Search" icon={Search} />
                    <span className="mt-[11px] mb-[33px] h-0.5 w-16 bg-[#dedede]" />
                    <div className="flex w-full flex-col gap-7">
                        {navItems.map((item) => <NavItem key={item.label} {...item} />)}
                    </div>
                    <span className="mt-auto mb-8 h-0.5 w-16 bg-[#dedede]" />
                    <NavItem label="Settings" icon={Settings} />
                </nav>
                <SidePanel />
                <Canvas />
            </div>
            <StatusBar />
        </div>
    )
}
